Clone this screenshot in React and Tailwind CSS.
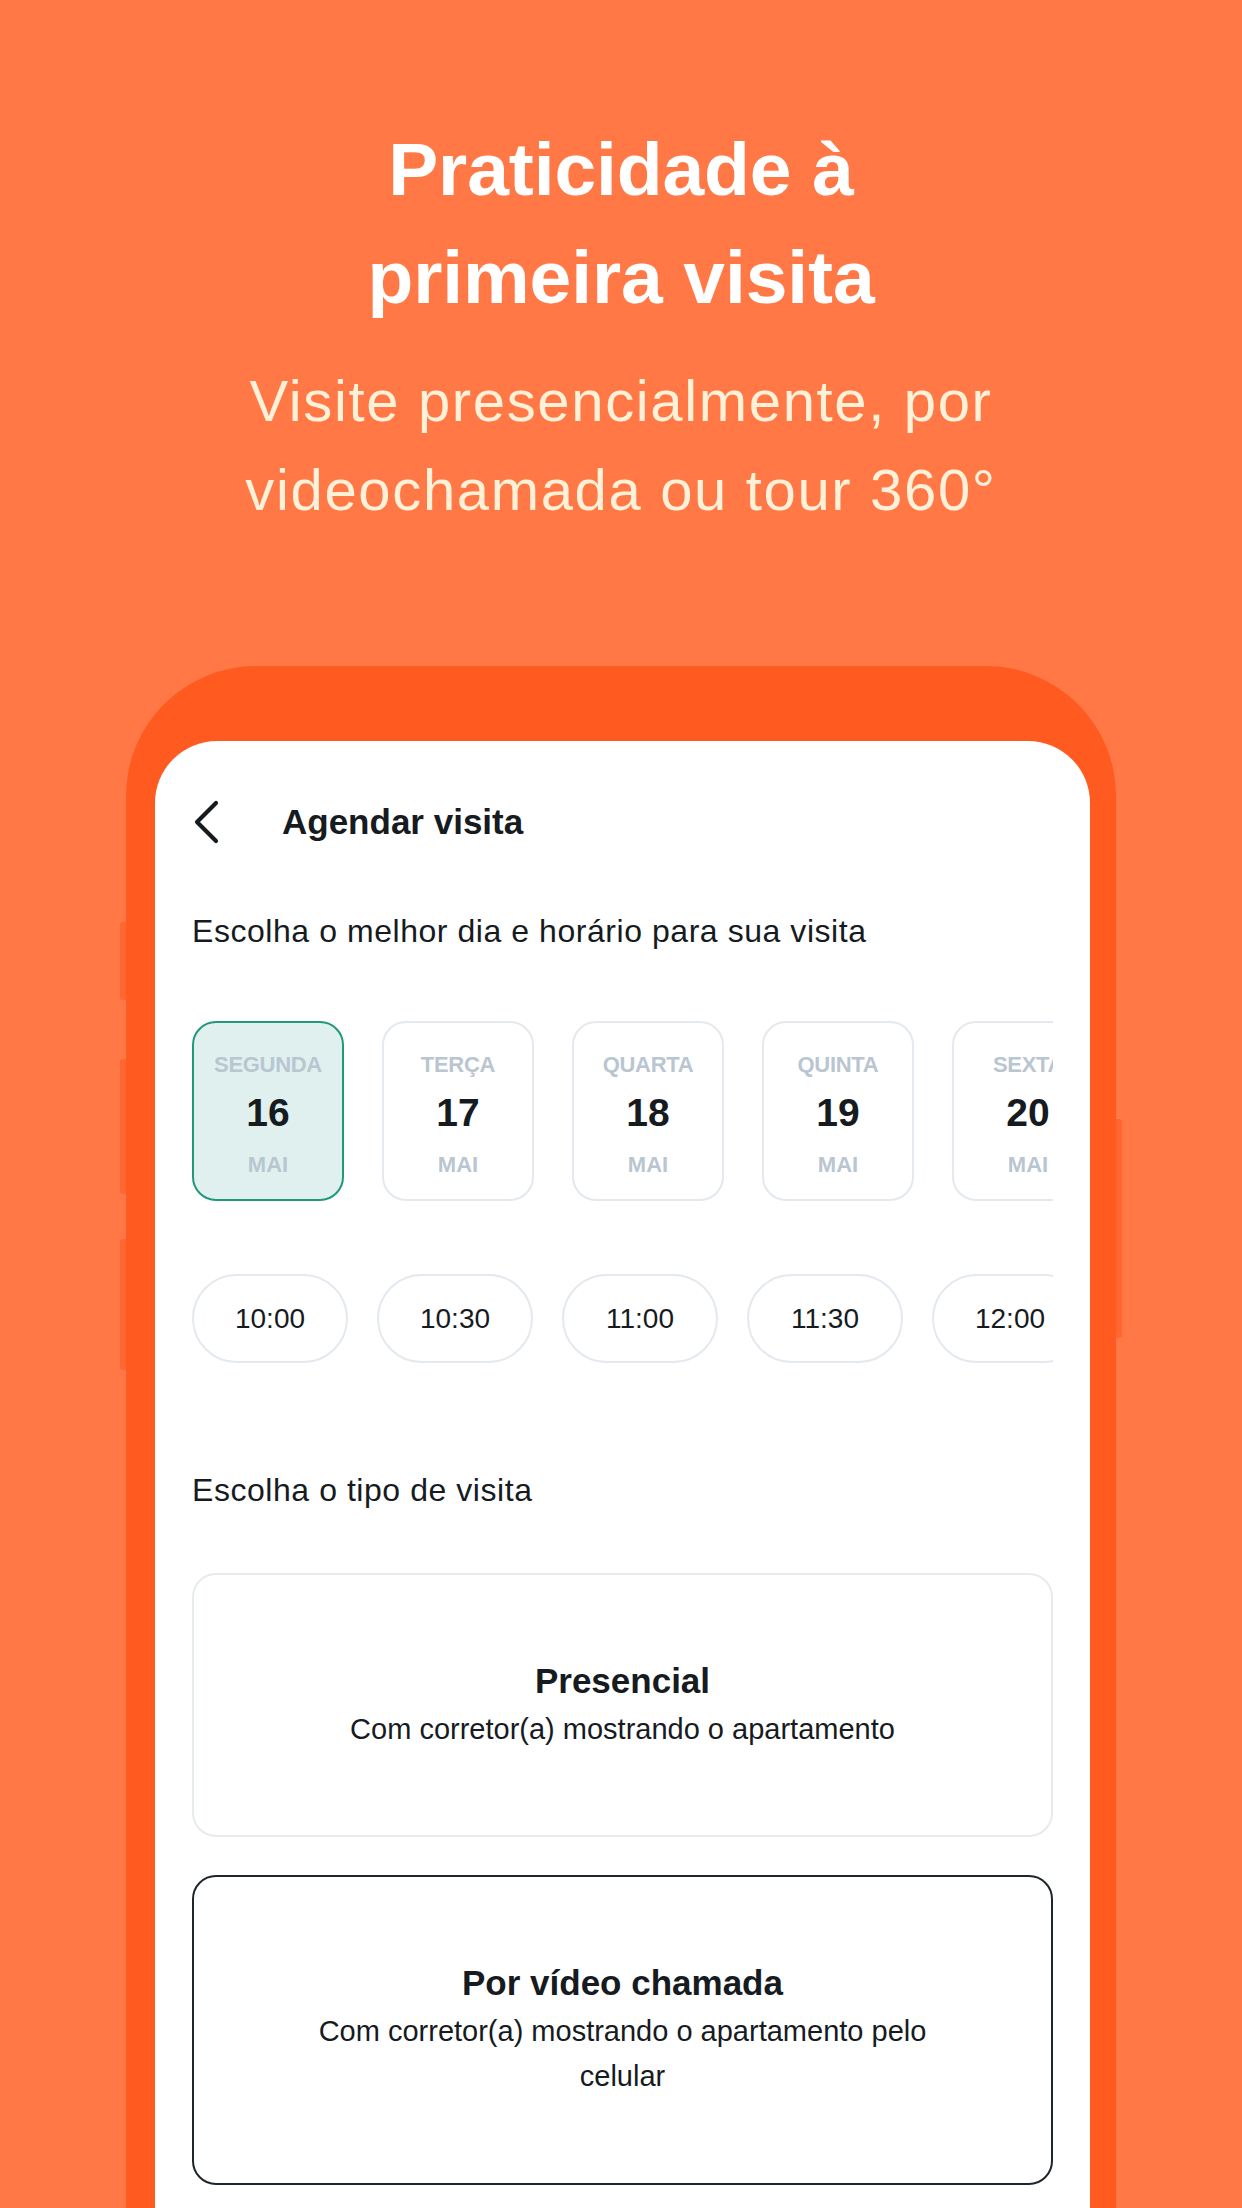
import React from 'react';

const days = [
  { label: 'SEGUNDA', day: '16', selected: true },
  { label: 'TERÇA', day: '17' },
  { label: 'QUARTA', day: '18' },
  { label: 'QUINTA', day: '19' },
  { label: 'SEXTA', day: '20' },
];

const times = ['10:00', '10:30', '11:00', '11:30', '12:00'];

const DayCard = ({ label, day, selected }) => (
  <div
    className={
      'shrink-0 w-[152px] h-[180px] rounded-[24px] border-2 flex flex-col items-center pt-[29px] ' +
      (selected ? 'bg-[#E0F0EE] border-[#1E9A7B]' : 'bg-white border-[#E3E9EE]')
    }
  >
    <span className="text-[22px] leading-[26px] font-bold text-[#B9C6D1] tracking-[-0.3px] whitespace-nowrap">{label}</span>
    <span className="mt-[13px] text-[39px] leading-[44px] font-bold text-[#161B1F]">{day}</span>
    <span className="mt-[17px] text-[22px] leading-[26px] font-bold text-[#B9C6D1]">MAI</span>
  </div>
);

const TimePill = ({ time }) => (
  <div className="shrink-0 w-[156px] h-[89px] rounded-full border-2 border-[#E3E9EE] flex items-center justify-center text-[28px] text-[#161B1F]">
    {time}
  </div>
);

const VisitOption = ({ title, desc, active, tall }) => (
  <div
    className={
      'w-full rounded-[24px] border-2 flex flex-col items-center justify-center text-center ' +
      (tall ? 'h-[310px] ' : 'h-[264px] ') +
      (active ? 'border-[#1E262B]' : 'border-[#E6EBEE]')
    }
  >
    <div className="text-[35px] leading-[44px] font-bold text-[#161B1F]">{title}</div>
    <div className="mt-[4px] max-w-[640px] text-[29px] leading-[45px] text-[#161B1F]">{desc}</div>
  </div>
);

export default function App() {
  return (
    <div className="w-[1242px] h-[2208px] bg-[#FF7846] overflow-hidden flex flex-col items-center font-['Liberation_Sans',Arial,sans-serif]">
      <h1 className="mt-[115px] text-[75px] leading-[108px] font-bold text-white text-center tracking-[-0.1px]">
        Praticidade à
        <br />
        primeira visita
      </h1>
      <p className="mt-[25px] text-[58px] leading-[89px] text-[#FFF1D8] text-center tracking-[1.65px]">
        Visite presencialmente, por
        <br />
        videochamada ou tour 360°
      </p>

      <div className="relative mt-[132px] w-[990px] flex-1 bg-[#FF5B21] rounded-t-[130px] pt-[75px] pl-[29px] pr-[26px]">
        {/* side buttons */}
        <div className="absolute left-[-6px] top-[256px] w-[6px] h-[78px] bg-[#FF6630] rounded-l-[3px]" />
        <div className="absolute left-[-6px] top-[393px] w-[6px] h-[135px] bg-[#FF6630] rounded-l-[3px]" />
        <div className="absolute left-[-6px] top-[573px] w-[6px] h-[131px] bg-[#FF6630] rounded-l-[3px]" />
        <div className="absolute right-[-6px] top-[453px] w-[6px] h-[219px] bg-[#FF6630] rounded-r-[3px]" />

        <div className="h-full bg-white rounded-t-[62px] px-[37px] pt-[51px]">
          <div className="h-[60px] flex items-center">
            <svg width="28" height="46" viewBox="0 0 28 46" className="ml-[0px]">
              <path d="M24 4 L5 23 L24 42" fill="none" stroke="#161B1F" strokeWidth="4.2" strokeLinecap="round" strokeLinejoin="round" />
            </svg>
            <span className="ml-[62px] text-[35px] font-bold text-[#161B1F]">Agendar visita</span>
          </div>

          <div className="mt-[59px] text-[32px] leading-[40px] text-[#161B1F] tracking-[0.55px]">
            Escolha o melhor dia e horário para sua visita
          </div>

          <div className="mt-[70px] flex gap-[38px] overflow-hidden">
            {days.map((d) => (
              <DayCard key={d.day} {...d} />
            ))}
          </div>

          <div className="mt-[73px] flex gap-[29px] overflow-hidden">
            {times.map((t) => (
              <TimePill key={t} time={t} />
            ))}
          </div>

          <div className="mt-[107px] text-[32px] leading-[40px] text-[#161B1F] tracking-[0.55px]">
            Escolha o tipo de visita
          </div>

          <div className="mt-[63px] flex flex-col gap-[38px]">
            <VisitOption title="Presencial" desc="Com corretor(a) mostrando o apartamento" />
            <VisitOption
              title="Por vídeo chamada"
              desc="Com corretor(a) mostrando o apartamento pelo celular"
              active
              tall
            />
          </div>
        </div>
      </div>
    </div>
  );
}
